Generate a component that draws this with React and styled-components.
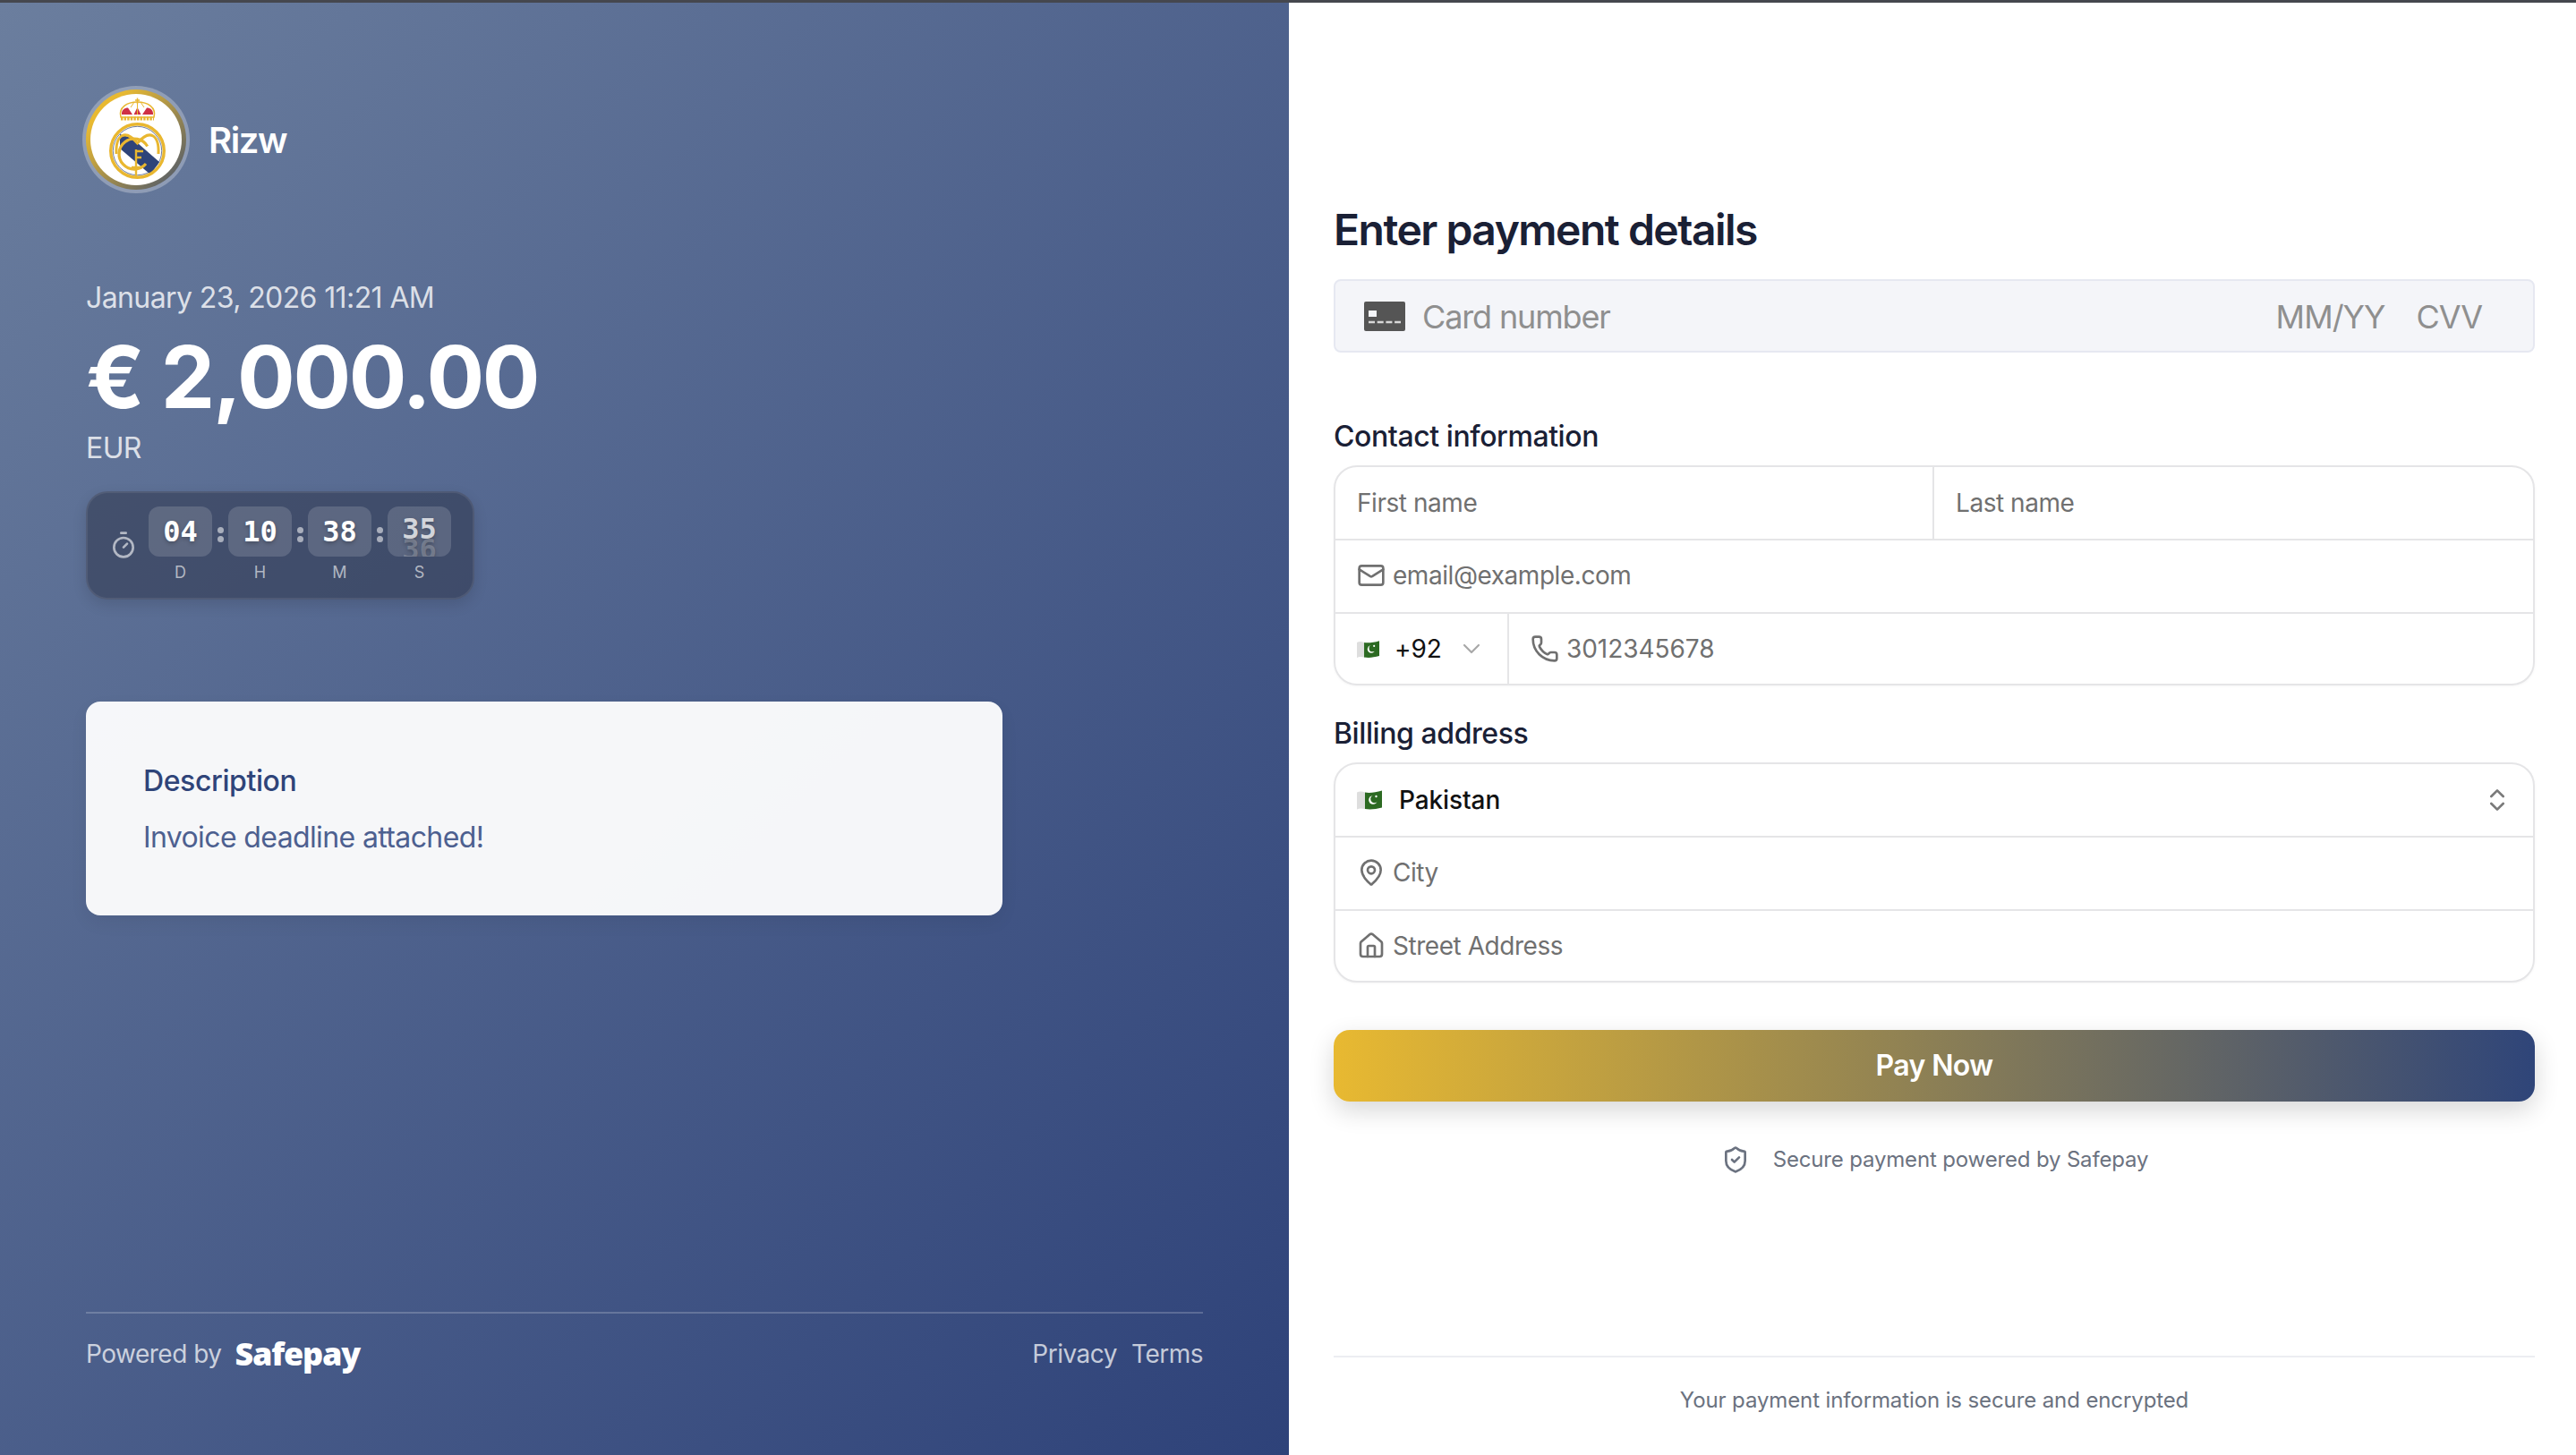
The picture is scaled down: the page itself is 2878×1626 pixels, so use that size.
import React from 'react';
import styled, { createGlobalStyle } from 'styled-components';
import { Timer, Mail, Phone, ChevronDown, ChevronsUpDown, MapPin, House, ShieldCheck } from 'lucide-react';

const Global = createGlobalStyle`
  html, body { margin: 0; padding: 0; background: #fff; }
  body { font-family: Inter, "Liberation Sans", sans-serif; overflow: hidden; }
  * { box-sizing: border-box; }
`;

const Page = styled.div`
  width: 2878px; height: 1626px; display: flex; flex-direction: column; overflow: hidden;
`;
const TopStrip = styled.div`height: 3px; background: #45474e; flex: none;`;
const Columns = styled.div`flex: 1; display: grid; grid-template-columns: 1440px 1438px; min-height: 0;`;

const LeftPanel = styled.section`
  background: linear-gradient(135deg, #6b7e9e 0%, #2e4279 100%);
  padding: 93px 96px 0;
  display: flex; flex-direction: column;
`;
const Brand = styled.div`display: flex; align-items: center; gap: 21px; margin-left: -4px;`;
const LogoRing = styled.div`
  width: 120px; height: 120px; border-radius: 50%; padding: 4px; background: rgba(255,255,255,.28); flex: none;
`;
const LogoInner = styled.div`
  width: 112px; height: 112px; border-radius: 50%; padding: 5px;
  background: linear-gradient(135deg, #e8b931 20%, #2f4579 110%);
`;
const LogoFace = styled.div`
  width: 102px; height: 102px; border-radius: 50%; background: #fff; overflow: hidden;
  svg { display: block; }
`;
const BrandName = styled.div`font-size: 40px; font-weight: 600; color: #fff; letter-spacing: -1.4px;`;
const DateText = styled.div`font-size: 32px; line-height: 48px; color: rgba(255,255,255,.8); margin-top: 93px; letter-spacing: -0.6px;`;
const Amount = styled.div`font-size: 96px; line-height: 110px; font-weight: 700; color: #fff; margin-top: 9px; letter-spacing: -2.3px;`;
const Currency = styled.div`font-size: 32px; line-height: 44px; color: rgba(255,255,255,.8); margin-top: 3px; letter-spacing: -0.6px;`;
const TimerBox = styled.div`
  align-self: flex-start; margin-top: 26px; width: 434px; height: 121px;
  display: flex; align-items: flex-start; gap: 12px; padding: 15px 24px;
  background: rgba(45,52,75,.55); border: 2px solid rgba(255,255,255,.08); border-radius: 24px;
  box-shadow: 0 6px 16px rgba(0,0,0,.12);
`;
const TimerIcon = styled.div`color: rgba(255,255,255,.6); margin-top: 27px; height: 32px; svg { display: block; }`;
const Units = styled.div`display: grid; grid-template-columns: repeat(4, 71px); column-gap: 18px;`;
const Unit = styled.div`position: relative; display: flex; flex-direction: column; align-items: center; gap: 6px;`;
const DigitBox = styled.div`
  position: relative; width: 71px; height: 56px; border-radius: 12px; overflow: hidden;
  background: rgba(255,255,255,.15); display: flex; align-items: center; justify-content: center;
  font-family: "DejaVu Sans Mono", monospace; font-size: 32px; font-weight: 700; color: ${p => p.$faded ? 'rgba(255,255,255,.75)' : '#fff'};
  text-shadow: 0 2px 4px rgba(0,0,0,.25);
`;
const OldDigit = styled.span`position: relative; top: -3px;`;
const NextDigit = styled.span`position: absolute; left: 0; right: 0; top: 29px; text-align: center; color: rgba(255,255,255,.22);`;
const UnitLabel = styled.div`font-size: 18px; line-height: 24px; color: rgba(255,255,255,.6);`;
const Colon = styled.span`
  position: absolute; right: -13px; top: 23px; width: 7px; height: 17px;
  display: flex; flex-direction: column; justify-content: space-between;
  &::before, &::after { content: ''; width: 7px; height: 7px; border-radius: 50%; background: rgba(255,255,255,.55); }
`;
const DescCard = styled.div`
  margin-top: 114px; width: 1024px; height: 239px; border-radius: 16px; background: rgba(255,255,255,.95);
  padding: 69px 64px 0; box-shadow: 0 8px 20px rgba(0,0,0,.06);
`;
const DescTitle = styled.div`font-size: 32px; line-height: 40px; font-weight: 500; color: #2f4479; letter-spacing: -0.4px;`;
const DescBody = styled.div`font-size: 32px; line-height: 40px; color: #4d6090; margin-top: 23px; letter-spacing: -0.62px;`;
const LeftFooter = styled.footer`
  margin-top: auto; margin-bottom: 90px; width: 1248px; border-top: 2px solid rgba(255,255,255,.2);
  padding-top: 22px; display: flex; align-items: center; justify-content: space-between;
  font-size: 28px; color: rgba(255,255,255,.72); letter-spacing: -0.5px;
`;
const Powered = styled.div`display: flex; align-items: center; gap: 15px;`;
const SafepayMark = styled.span`font-family: "Noto Sans", sans-serif; font-size: 36px; line-height: 46px; font-weight: 900; color: #fff; letter-spacing: -1.2px;`;
const FootLinks = styled.div`display: flex; gap: 16px;`;

const RightPanel = styled.section`
  background: #fff; padding: 0 46px 0 50px; display: flex; flex-direction: column;
`;
const Title = styled.h1`
  margin: 224px 0 0; font-size: 48px; line-height: 60px; font-weight: 600; color: #1a2035; letter-spacing: -1.5px;
`;
const CardField = styled.div`
  margin-top: 25px; height: 82px; border: 2px solid #e6e8f1; border-radius: 8px; background: #f4f5f9;
  display: flex; align-items: center; padding: 2px 57px 0 32px; font-size: 36px; color: #8f8f8f;
  letter-spacing: -1.15px;
`;
const CardIcon = styled.svg`flex: none; margin-right: 19px; display: block; margin-top: -2px;`;
const CardHint = styled.span`margin-left: ${p => p.$auto ? 'auto' : '35px'}; letter-spacing: -1px;`;
const SectionLabel = styled.div`font-size: 32px; line-height: 40px; font-weight: 500; color: #1a2035; letter-spacing: -0.42px; margin-top: ${p => p.$top}px;`;
const Group = styled.div`
  margin-top: 12px; border: 2px solid #e5e5e7; border-radius: 26px; overflow: hidden;
  box-shadow: 0 1px 3px rgba(0,0,0,.04);
`;
const Row = styled.div`
  height: 82px; display: flex; align-items: stretch;
  & + & { border-top: 2px solid #e5e5e7; }
  &:first-child, &:last-child { height: 80px; }
  &:nth-child(2) { padding-bottom: 2px; }
`;
const Cell = styled.div`
  flex: 1; ${p => p.$width ? `flex: none; width: ${p.$width}px;` : ''}
  display: flex; align-items: center; gap: 8px; padding: 0 24px;
  font-size: 28px; color: #707070; min-width: 0; letter-spacing: -0.45px;
  svg { flex: none; display: block; }
  & + & { border-left: 2px solid #e5e5e7; }
`;
const Digits = styled.span`letter-spacing: -0.05px;`;
const Strong = styled.span`color: #111; font-weight: ${p => p.$weight || 400}; margin-left: ${p => p.$left || 0}px; letter-spacing: -0.1px;`;
const PushRight = styled.span`margin-left: auto; display: flex; color: ${p => p.$color};`;
const PayButton = styled.button`
  margin-top: 53px; height: 80px; width: 100%; border: 0; border-radius: 18px; flex: none;
  background: linear-gradient(90deg, #e8b931 0%, #2f4579 100%);
  color: #fff; font: 600 32px/1 Inter, sans-serif; letter-spacing: -0.6px;
  box-shadow: 0 10px 28px rgba(0,0,0,.16);
`;
const Secure = styled.div`
  margin-top: 49px; display: flex; align-items: center; justify-content: center; gap: 26px; padding-left: 1px;
  font-size: 24px; line-height: 30px; color: #6b7280; letter-spacing: -0.16px;
  svg { display: block; }
`;
const RightFooter = styled.footer`
  margin-top: auto; height: 111px; border-top: 2px solid #ecedf2; padding-top: 33px;
  text-align: center; font-size: 24px; line-height: 30px; color: #6b7280; letter-spacing: -0.11px;
`;

function Crest() {
  const gold = '#e9b730', blue = '#2f4479';
  return (
    <svg width="102" height="102" viewBox="101 105 102 102" xmlns="http://www.w3.org/2000/svg" aria-hidden="true">
      <path d="M134 150 L147 154 L178 181 L168 195 L134 166 Z" fill={blue} />
      <circle cx="153.5" cy="168.5" r="29.8" fill="none" stroke={gold} strokeWidth="3.4" />
      <circle cx="153.5" cy="168.5" r="27.2" fill="none" stroke={blue} strokeWidth=".7" />
      <path d="M164.7 163.5 A17 17 0 1 0 163 183" fill="none" stroke={gold} strokeWidth="3.2" />
      <path d="M130 172 C129 150 140 144 153.5 160 C167 144 178 150 177 172" fill="none" stroke={gold} strokeWidth="3" />
      <path d="M152 167 V197 M152 169 H160 M152 176 H158 M147 187 H158" fill="none" stroke={gold} strokeWidth="2.4" />
      <path d="M135 131 C132 120 142 114 153.5 114 C165 114 175 120 172 131 Z" fill="#fff" stroke={gold} strokeWidth="1.5" />
      <path d="M136 128 C135.5 123 139 120.5 143 120.5 L148 128 Z M171 128 C171.5 123 168 120.5 164 120.5 L159 128 Z M149.5 128 L153.5 120 L157.5 128 Z" fill="#cf3045" />
      <path d="M146 120 L150 114 M161 120 L157 114 M153.5 114 V128" stroke={gold} strokeWidth="1" />
      <path d="M135 132.5 H172" stroke={gold} strokeWidth="4" strokeDasharray="2.4 1.2" />
      <path d="M153.5 109.5 V116 M151 112 H156" stroke={gold} strokeWidth="1.5" />
    </svg>
  );
}

function Flag({ width, height }) {
  return (
    <svg width={width} height={height} viewBox="0 0 28 22" xmlns="http://www.w3.org/2000/svg" aria-hidden="true">
      <path d="M0 2.5 C3 1 6 1.5 9 2.5 V21 C6 20.5 3 20 0 21.5 Z" fill="#dedede" />
      <path d="M9 2.5 C14 3.5 21 2.5 28 0.5 V19.5 C21 21.5 14 22 9 21 Z" fill="#2c6a22" />
      <circle cx="18" cy="11" r="4.8" fill="#fff" />
      <circle cx="19.6" cy="9.8" r="4.4" fill="#2c6a22" />
      <circle cx="21.5" cy="7" r="1.2" fill="#fff" />
    </svg>
  );
}

const units = [['04', 'D'], ['10', 'H'], ['38', 'M']];

export default function App() {
  return (
    <Page>
      <Global />
      <TopStrip />
      <Columns>
        <LeftPanel>
          <Brand>
            <LogoRing><LogoInner><LogoFace><Crest /></LogoFace></LogoInner></LogoRing>
            <BrandName>Rizw</BrandName>
          </Brand>
          <DateText>January 23, 2026 11:21 AM</DateText>
          <Amount>€ 2,000.00</Amount>
          <Currency>EUR</Currency>
          <TimerBox>
            <TimerIcon><Timer size={32} /></TimerIcon>
            <Units>
              {units.map(([v, l]) => (
                <Unit key={l}>
                  <DigitBox>{v}</DigitBox>
                  <Colon />
                  <UnitLabel>{l}</UnitLabel>
                </Unit>
              ))}
              <Unit>
                <DigitBox $faded>
                  <OldDigit>35</OldDigit>
                  <NextDigit>36</NextDigit>
                </DigitBox>
                <UnitLabel>S</UnitLabel>
              </Unit>
            </Units>
          </TimerBox>
          <DescCard>
            <DescTitle>Description</DescTitle>
            <DescBody>Invoice deadline attached!</DescBody>
          </DescCard>
          <LeftFooter>
            <Powered>Powered by <SafepayMark>Safepay</SafepayMark></Powered>
            <FootLinks><span>Privacy</span><span>Terms</span></FootLinks>
          </LeftFooter>
        </LeftPanel>
        <RightPanel>
          <Title>Enter payment details</Title>
          <CardField>
            <CardIcon width="46" height="33" viewBox="0 0 46 33">
              <rect width="46" height="33" rx="2" fill="#555" />
              <rect x="5" y="10" width="9" height="7" fill="#f4f5f9" />
              <path d="M5 23 H41" stroke="#d8d8d8" strokeWidth="2.4" strokeDasharray="7 2.7" />
            </CardIcon>
            <span>Card number</span>
            <CardHint $auto>MM/YY</CardHint>
            <CardHint>CVV</CardHint>
          </CardField>
          <SectionLabel $top={74}>Contact information</SectionLabel>
          <Group>
            <Row>
              <Cell $width={667}>First name</Cell>
              <Cell>Last name</Cell>
            </Row>
            <Row><Cell><Mail size={32} />email@example.com</Cell></Row>
            <Row>
              <Cell $width={192}>
                <Flag width={25} height={21} />
                <Strong $left={9}>+92</Strong>
                <PushRight $color="#a8a8a8"><ChevronDown size={32} strokeWidth={1.6} /></PushRight>
              </Cell>
              <Cell><Phone size={32} /><Digits>3012345678</Digits></Cell>
            </Row>
          </Group>
          <SectionLabel $top={34}>Billing address</SectionLabel>
          <Group>
            <Row>
              <Cell>
                <Flag width={28} height={22} />
                <Strong $left={11} $weight={500}>Pakistan</Strong>
                <PushRight $color="#7a7a7a"><ChevronsUpDown size={32} /></PushRight>
              </Cell>
            </Row>
            <Row><Cell><MapPin size={32} />City</Cell></Row>
            <Row><Cell><House size={32} />Street Address</Cell></Row>
          </Group>
          <PayButton>Pay Now</PayButton>
          <Secure><ShieldCheck size={32} />Secure payment powered by Safepay</Secure>
          <RightFooter>Your payment information is secure and encrypted</RightFooter>
        </RightPanel>
      </Columns>
    </Page>
  );
}
